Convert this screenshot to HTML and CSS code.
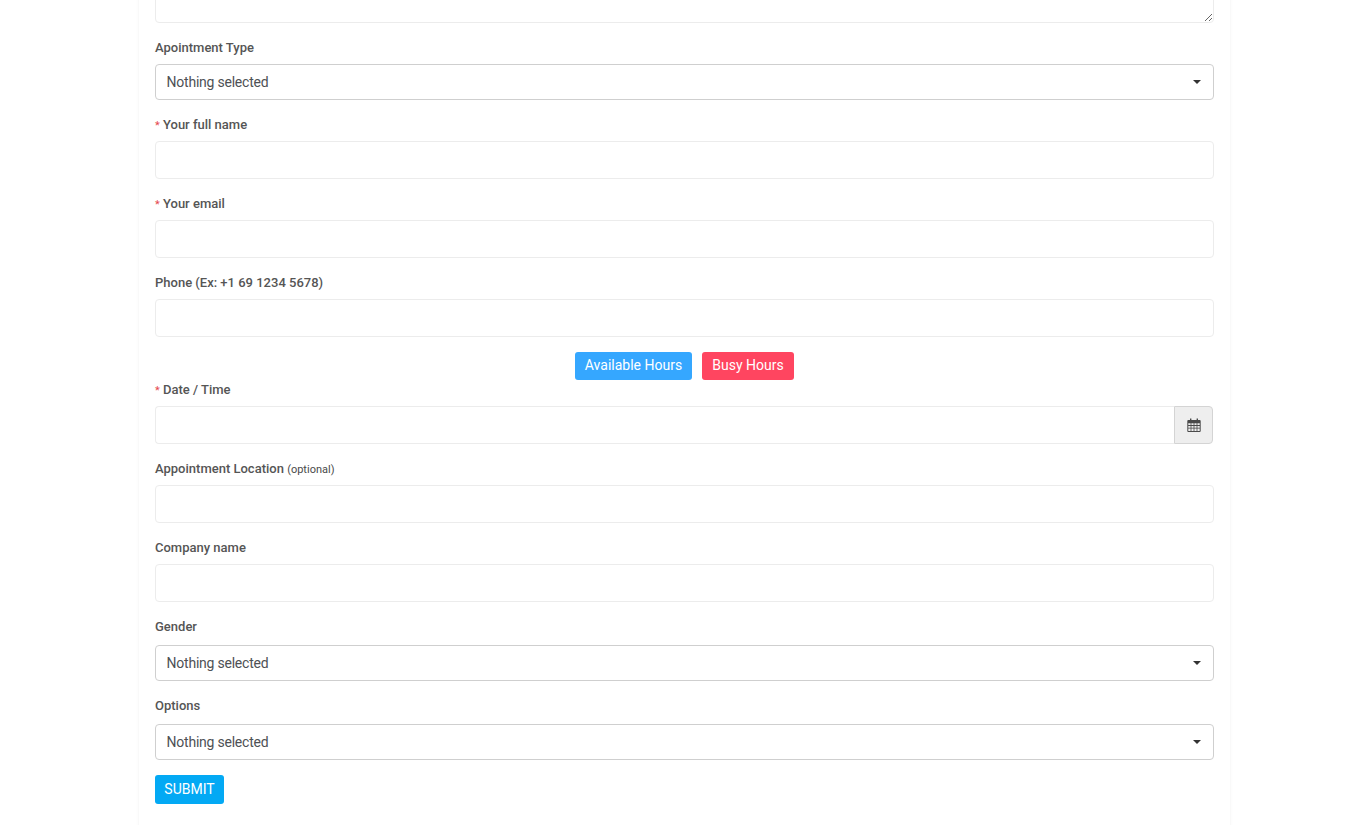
FILE: index.html
```html
<!DOCTYPE html>
<html lang="en">
<head>
<meta charset="utf-8">
<title>Book an appointment</title>
<link rel="stylesheet" href="styles.css">
</head>
<body>
<main class="card">
  <form class="form">
    <div class="group"><textarea class="control textarea"></textarea></div>
    <div class="group">
      <label class="label">Apointment Type</label>
      <button type="button" class="select"><span>Nothing selected</span><i class="caret"></i></button>
    </div>
    <div class="group">
      <label class="label"><span class="req">*</span> Your full name</label>
      <input class="control" type="text">
    </div>
    <div class="group">
      <label class="label"><span class="req">*</span> Your email</label>
      <input class="control" type="text">
    </div>
    <div class="group">
      <label class="label">Phone (Ex: +1 69 1234 5678)</label>
      <input class="control" type="text">
    </div>
    <div class="hours">
      <button type="button" class="pill pill-blue">Available Hours</button>
      <button type="button" class="pill pill-red">Busy Hours</button>
    </div>
    <div class="group">
      <label class="label"><span class="req">*</span> Date / Time</label>
      <div class="input-group">
        <input class="control control-joined" type="text">
        <span class="addon">
          <svg class="cal" viewBox="0 0 14 14" width="14" height="14" aria-hidden="true">
            <path fill="#4a4a4a" fill-rule="evenodd" d="M1.2 2H3V.6h1.400V2h5.200V.6H11V2h1.800c.5 0 .9.4.9.9V13c0 .5-.4.9-.9.9H1.200c-.5 0-.9-.4-.9-.9V2.900c0-.5.4-.9.9-.9zM1.300 5.300v1.800h2.300V5.300zm3.100 0v1.800h2.200V5.300zm3 0v1.800h2.200V5.300zm3 0v1.800h2.300V5.300zM1.300 7.900v1.900h2.300V7.900zm3.100 0v1.900h2.200V7.900zm3 0v1.900h2.200V7.900zm3 0v1.900h2.300V7.900zM1.300 10.600v2.300h2.300v-2.300zm3.100 0v2.300h2.200v-2.300zm3 0v2.300h2.200v-2.300zm3 0v2.300h2.300v-2.300z"/>
          </svg>
        </span>
      </div>
    </div>
    <div class="group">
      <label class="label">Appointment Location <small class="hint">(optional)</small></label>
      <input class="control" type="text">
    </div>
    <div class="group">
      <label class="label">Company name</label>
      <input class="control" type="text">
    </div>
    <div class="group">
      <label class="label label-wide">Gender</label>
      <button type="button" class="select"><span>Nothing selected</span><i class="caret"></i></button>
    </div>
    <div class="group">
      <label class="label label-wide">Options</label>
      <button type="button" class="select"><span>Nothing selected</span><i class="caret"></i></button>
    </div>
    <button type="button" class="submit">SUBMIT</button>
  </form>
</main>
</body>
</html>
```
FILE: styles.css
```css
* { box-sizing: border-box; }
html, body { margin: 0; height: 825px; overflow: hidden; background: #fff; }
body { font-family: Roboto, "Liberation Sans", sans-serif; color: #4a4a4a; }

.card {
  width: 1093px;
  min-height: 900px;
  margin-left: 138px;
  margin-top: -40px;
  padding: 0 16px;
  background: #fff;
  border-left: 1px solid #f9f9f9;
  border-right: 1px solid #f9f9f9;
  box-shadow: 0 0 4px rgba(0, 0, 0, .02);
}
.form { display: flex; flex-direction: column; }
.group { margin-bottom: 15px; }

.label {
  display: block;
  height: 21px;
  margin-bottom: 5px;
  font-size: 13px;
  font-weight: 500;
  line-height: 19px;
  color: #555;
}
.label-wide { margin-bottom: 7px; }
.req { font-size: 11px; font-weight: 400; color: #e5484d; }
.hint { font-size: 11px; font-weight: 400; color: #4a4a4a; }

.control {
  display: block;
  width: 100%;
  height: 38px;
  padding: 6px 12px;
  font: 14px Roboto, sans-serif;
  background: #fff;
  border: 1px solid #ececec;
  border-radius: 4px;
  outline: 0;
}
.textarea { height: 63px; resize: vertical; }

.select {
  display: flex;
  align-items: center;
  justify-content: space-between;
  width: 100%;
  height: 36px;
  padding: 0 12px 0 10.5px;
  font: 14px Roboto, sans-serif;
  letter-spacing: -.22px;
  color: #4e5155;
  background: #fff;
  border: 1px solid #cfcfcf;
  border-radius: 4px;
}
.caret {
  width: 0;
  height: 0;
  border-top: 4px solid #333;
  border-left: 4px solid transparent;
  border-right: 4px solid transparent;
}

.hours { display: flex; justify-content: center; gap: 10px; }
.pill {
  height: 28px;
  padding: 0 0 2px;
  font: 400 14px Roboto, sans-serif;
  color: #fff;
  border: 0;
  border-radius: 3px;
}
.pill-blue { width: 117px; background: #35a7ff; }
.pill-red { width: 92px; background: #ff4560; }

.input-group { display: flex; margin-right: 1px; }
.control-joined { flex: 1; width: auto; border-right: 0; border-radius: 4px 0 0 4px; }
.addon {
  display: flex;
  align-items: center;
  justify-content: center;
  width: 39px;
  height: 38px;
  background: #eee;
  border: 1px solid #d4d4d4;
  border-radius: 0 4px 4px 0;
}

.submit {
  align-self: flex-start;
  width: 69px;
  height: 29px;
  padding: 0 0 1px;
  font: 400 14px Roboto, sans-serif;
  color: #fff;
  background: #03a9f4;
  border: 0;
  border-radius: 3px;
}
```
